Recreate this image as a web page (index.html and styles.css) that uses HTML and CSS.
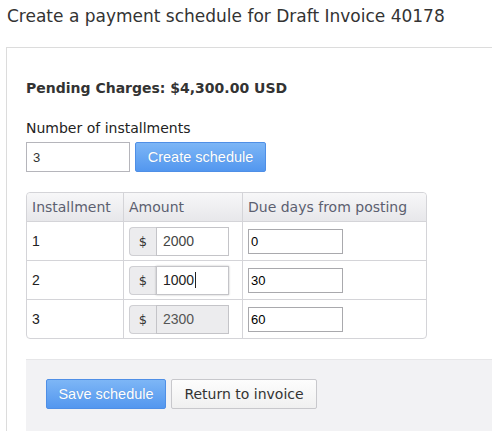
FILE: index.html
```html
<!DOCTYPE html>
<html>
<head>
<meta charset="utf-8">
<link rel="stylesheet" href="styles.css">
</head>
<body>
<h1 class="title">Create a payment schedule for Draft Invoice 40178</h1>
<div class="panel">
  <div class="pending">Pending Charges: $4,300.00 USD</div>
  <label class="label">Number of installments</label>
  <div class="count-row">
    <input class="count-input" type="text" value="3">
    <button class="btn btn-primary">Create schedule</button>
  </div>
  <table class="sched">
    <thead>
      <tr><th class="c1">Installment</th><th class="c2">Amount</th><th class="c3">Due days from posting</th></tr>
    </thead>
    <tbody>
      <tr>
        <td>1</td>
        <td><div class="group"><span class="addon">$</span><span class="amt">2000</span></div></td>
        <td><span class="due">0</span></td>
      </tr>
      <tr>
        <td>2</td>
        <td><div class="group"><span class="addon">$</span><span class="amt focus">1000<span class="caret"></span></span></div></td>
        <td><span class="due">30</span></td>
      </tr>
      <tr>
        <td>3</td>
        <td><div class="group"><span class="addon">$</span><span class="amt disabled">2300</span></div></td>
        <td><span class="due">60</span></td>
      </tr>
    </tbody>
  </table>
  <div class="footer">
    <button class="btn btn-primary save">Save schedule</button>
    <button class="btn btn-default">Return to invoice</button>
  </div>
</div>
</body>
</html>
```
FILE: styles.css
```css
html, body {
  margin: 0;
  padding: 0;
  overflow: hidden;
  background: #fff;
}
body {
  font-family: "DejaVu Sans", Verdana, sans-serif;
  color: #333;
  width: 492px;
  height: 431px;
}
.title {
  font-size: 17px;
  font-weight: normal;
  margin: 0;
  padding: 5px 0 0 7px;
  height: 47px;
  box-sizing: border-box;
  line-height: 22px;
  color: #333;
}
.panel {
  margin-left: 6px;
  width: 486px;
  border-left: 1px solid #dcdcdc;
  border-top: 1px solid #dcdcdc;
  padding: 32px 0 0 19px;
  height: 384px;
  box-sizing: border-box;
  overflow: hidden;
}
.pending {
  font-size: 14px;
  font-weight: bold;
  color: #333;
  line-height: 17px;
}
.label {
  display: block;
  font-size: 14px;
  line-height: 17px;
  margin-top: 23px;
  color: #222;
}
.count-row {
  display: flex;
  gap: 5px;
  margin-top: 5px;
}
.count-input {
  width: 104px;
  height: 30px;
  box-sizing: border-box;
  border: 1px solid #b5b5bb;
  padding: 0 6px;
  font-family: "Liberation Sans", Arial, sans-serif;
  font-size: 13px;
  color: #333;
  margin: 0;
  outline: none;
}
.btn {
  font-family: "Liberation Sans", Arial, sans-serif;
  font-size: 14.5px;
  height: 30px;
  box-sizing: border-box;
  border-radius: 2px;
  margin: 0;
  padding: 0;
  cursor: pointer;
}
.btn-primary {
  width: 131px;
  color: #fff;
  background: linear-gradient(#7db6f6, #5397ef);
  border: 1px solid #4f8fe6;
  text-shadow: 0 0 1px rgba(0,0,0,0.15);
}
.btn-default {
  width: 146px;
  color: #333;
  background: linear-gradient(#fdfdfd, #f0f0f0);
  border: 1px solid #c8c8cc;
  font-family: "DejaVu Sans", Verdana, sans-serif;
  font-size: 14px;
}
.sched {
  margin-top: 20px;
  border-collapse: separate;
  border-spacing: 0;
  border: 1px solid #d4d4d8;
  border-radius: 4px;
  width: 401px;
  font-size: 14px;
}
.sched th {
  text-align: left;
  font-weight: normal;
  color: #5c5f70;
  background: linear-gradient(#f7f7f8, #e7e7ea);
  height: 28px;
  padding: 0 0 0 5px;
  border-bottom: 1px solid #d4d4d8;
  line-height: 16px;
}
.sched th + th, .sched td + td {
  border-left: 1px solid #d4d4d8;
}
.sched th.c1 { width: 91px; border-top-left-radius: 4px; }
.sched th.c2 { width: 113px; }
.sched th.c3 { border-top-right-radius: 4px; }
.sched td {
  height: 38px;
  padding: 0 0 0 5px;
  border-bottom: 1px solid #d4d4d8;
  color: #222;
  font-family: "Liberation Sans", Arial, sans-serif;
  font-size: 14px;
}
.sched tr:last-child td { border-bottom: none; }
.group {
  display: flex;
  width: 100px;
  height: 29px;
  box-sizing: border-box;
}
.addon {
  width: 27px;
  box-sizing: border-box;
  background: #ececee;
  border: 1px solid #cfcfd3;
  border-right: none;
  border-radius: 4px 0 0 4px;
  display: flex;
  align-items: center;
  justify-content: center;
  color: #333;
  font-family: "DejaVu Sans", Verdana, sans-serif;
  font-size: 13px;
}
.amt {
  flex: 1;
  border: 1px solid #c4c4c8;
  display: flex;
  align-items: center;
  padding-left: 6px;
  color: #444;
  font-family: "Liberation Sans", Arial, sans-serif;
  font-size: 14px;
  background: #fff;
}
.amt.focus {
  box-shadow: 0 0 2px rgba(0,0,0,0.25);
  color: #222;
}
.amt.disabled {
  background: #ececee;
  color: #555;
}
.caret {
  display: inline-block;
  width: 1px;
  height: 16px;
  background: #222;
  margin-left: 1px;
}
.due {
  display: flex;
  align-items: center;
  width: 95px;
  height: 25px;
  box-sizing: border-box;
  border: 1px solid #a9a9ad;
  padding-left: 2px;
  color: #000;
  font-family: "Liberation Sans", Arial, sans-serif;
  font-size: 13px;
  background: #fff;
}
.footer {
  margin-top: 20px;
  background: #f2f2f4;
  border-top: 1px solid #e6e6e8;
  padding: 19px 0 0 20px;
  height: 80px;
  display: flex;
  gap: 5px;
  align-items: flex-start;
}
.save {
  width: 120px;
  font-size: 14.5px;
}
```
